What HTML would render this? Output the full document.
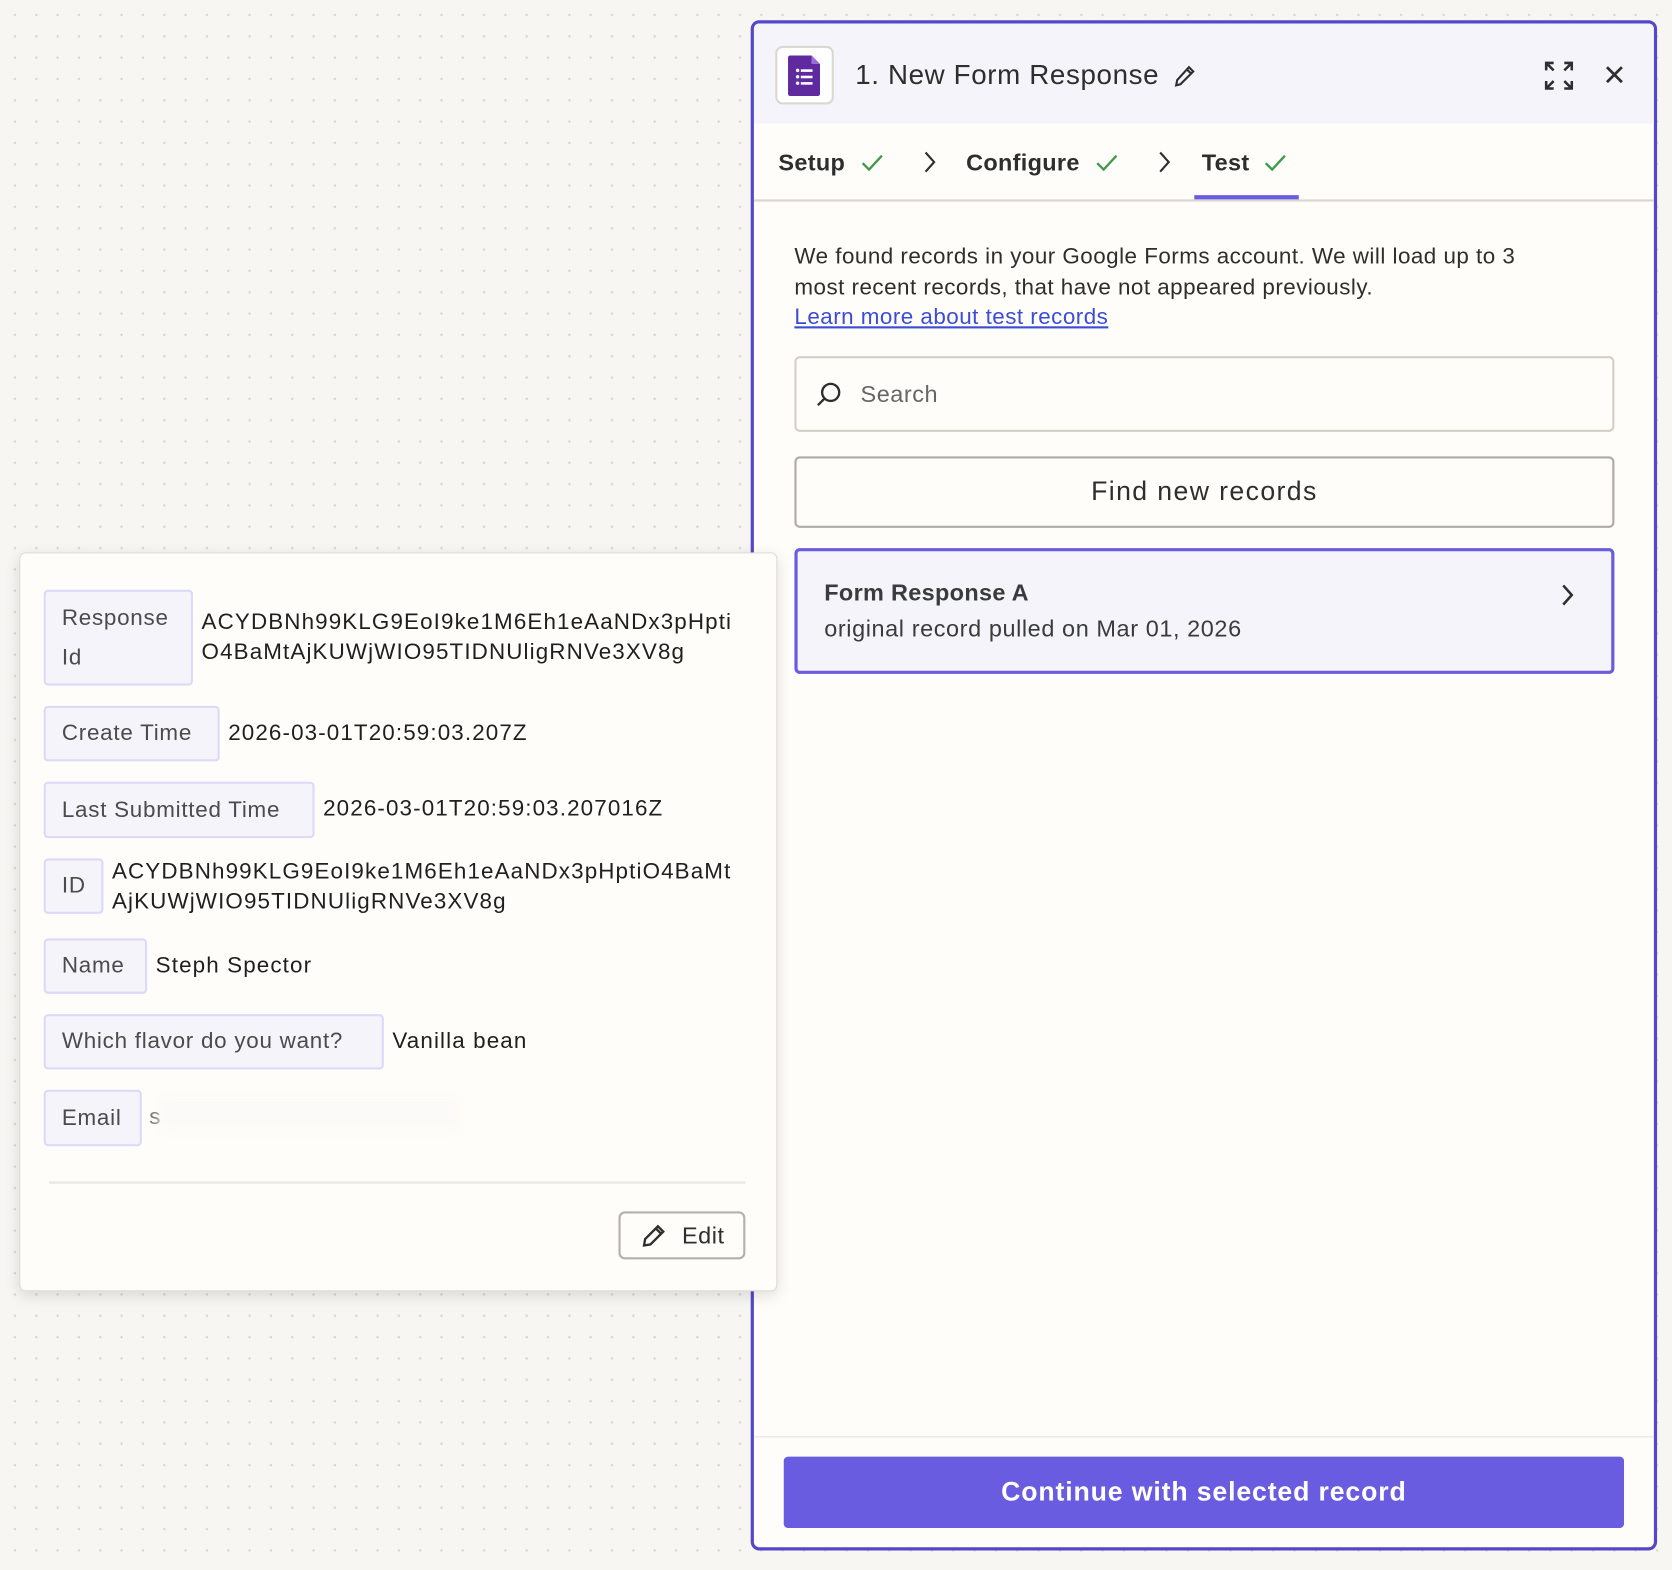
<!DOCTYPE html>
<html><head><meta charset="utf-8"><style>
*{box-sizing:border-box;margin:0;padding:0}
html,body{width:1672px;height:1570px;overflow:hidden;background:#f7f6f3;font-family:"Liberation Sans",sans-serif}
#w{position:absolute;left:0;top:0;width:1568px;height:1472px;transform:scale(1.06633);transform-origin:0 0;
background-color:#f7f6f3;background-image:radial-gradient(#d9d6cf 1px,transparent 1.2px);background-size:20px 20px;background-position:4px 4px}
.a{position:absolute}
.panel{left:704px;top:19px;width:850px;height:1435px;border:3px solid #5447c9;border-radius:8px;background:#fffdf9;overflow:hidden}
.hdr{left:0;top:0;width:100%;height:94px;background:#f5f4fb}
.t{color:#2d2e2e}
.lbl{position:absolute;left:41px;background:#f5f4fb;border:2px solid #dcdaf8;border-radius:4px;font-size:21px;color:#4b4b4b;padding:0 15px;display:flex;align-items:center;letter-spacing:0.7px;white-space:nowrap;z-index:3}
.val{position:absolute;font-size:21px;color:#1f1f1f;line-height:28px;letter-spacing:1.05px;white-space:nowrap;z-index:3}
</style></head><body><div id="w">

<div class="a panel">
<div class="a hdr"></div>
<div class="a" style="left:20px;top:21px;width:55px;height:55px;background:#fff;border:2px solid #dcd8d0;border-radius:7px">
<svg class="a" style="left:10px;top:7px" width="32" height="38" viewBox="0 0 32 38"><path d="M2 0h20l8 8v28a2 2 0 0 1-2 2H2a2 2 0 0 1-2-2V2a2 2 0 0 1 2-2z" fill="#5f2aa0"/><path d="M22 0l8 8h-8z" fill="#9b6fd6"/><g fill="#fff"><circle cx="9" cy="14" r="1.6"/><circle cx="9" cy="20" r="1.6"/><circle cx="9" cy="26" r="1.6"/><rect x="12" y="13" width="11" height="2.4"/><rect x="12" y="19" width="11" height="2.4"/><rect x="12" y="25" width="11" height="2.4"/></g></svg></div>
<div class="a t" style="left:95px;top:33px;font-size:26px;font-weight:500;letter-spacing:0.6px">1. New Form Response</div>
<svg class="a" style="left:392px;top:37px" width="24" height="24" viewBox="0 0 24 24" fill="none" stroke="#2d2e2e" stroke-width="2"><path d="M4 21l1-5L16 4l4 4L8 20z M14 6l4 4"/></svg>
<svg class="a" style="left:741px;top:35px" width="28" height="28" viewBox="0 0 28 28" fill="none" stroke="#2d2e2e" stroke-width="2.4"><path d="M2 9V2h7M2 2l7 7M26 9V2h-7M26 2l-7 7M2 19v7h7M2 26l7-7M26 19v7h-7M26 26l-7-7"/></svg>
<svg class="a" style="left:798px;top:39px" width="18" height="18" viewBox="0 0 18 18" stroke="#2d2e2e" stroke-width="2.6"><path d="M2 2l14 14M16 2L2 16"/></svg>
<div class="a t" style="left:23px;top:118px;font-size:22px;font-weight:bold;letter-spacing:0.3px">Setup</div>
<svg class="a" style="left:100px;top:122px" width="22" height="18" viewBox="0 0 22 18" fill="none" stroke="#3f9a4e" stroke-width="2.2"><path d="M2 9l6 6L20 2"/></svg>
<svg class="a" style="left:158px;top:118px" width="14" height="24" viewBox="0 0 14 24" fill="none" stroke="#2d2e2e" stroke-width="2"><path d="M3 3l8 9-8 9"/></svg>
<div class="a t" style="left:199px;top:118px;font-size:22px;font-weight:bold;letter-spacing:0.3px">Configure</div>
<svg class="a" style="left:320px;top:122px" width="22" height="18" viewBox="0 0 22 18" fill="none" stroke="#3f9a4e" stroke-width="2.2"><path d="M2 9l6 6L20 2"/></svg>
<svg class="a" style="left:378px;top:118px" width="14" height="24" viewBox="0 0 14 24" fill="none" stroke="#2d2e2e" stroke-width="2"><path d="M3 3l8 9-8 9"/></svg>
<div class="a t" style="left:420px;top:118px;font-size:22px;font-weight:bold;letter-spacing:0.3px">Test</div>
<svg class="a" style="left:478px;top:122px" width="22" height="18" viewBox="0 0 22 18" fill="none" stroke="#3f9a4e" stroke-width="2.2"><path d="M2 9l6 6L20 2"/></svg>
<div class="a" style="left:413px;top:161px;width:98px;height:4px;background:#6a5ce0"></div>
<div class="a" style="left:0;top:165px;width:100%;height:2px;background:#d9d5cd"></div>
<div class="a t" style="left:38px;top:205px;font-size:21px;line-height:28.5px;width:790px;letter-spacing:0.45px;white-space:nowrap">We found records in your Google Forms account. We will load up to 3<br>most recent records, that have not appeared previously.<br><span style="color:#3b4dd6;text-decoration:underline">Learn more about test records</span></div>
<div class="a" style="left:38px;top:312px;width:769px;height:71px;border:2px solid #d3cfc7;border-radius:5px"></div>
<svg class="a" style="left:57px;top:335px" width="26" height="26" viewBox="0 0 26 26" fill="none" stroke="#2d2e2e" stroke-width="2.2"><circle cx="15" cy="11" r="8"/><path d="M9 17l-6 6"/></svg>
<div class="a" style="left:100px;top:335px;font-size:22px;color:#666;letter-spacing:0.5px">Search</div>
<div class="a t" style="left:38px;top:406px;width:769px;height:67px;border:2px solid #aeaba4;border-radius:5px;display:flex;align-items:center;justify-content:center;font-size:25px;font-weight:500;letter-spacing:1.3px">Find new records</div>
<div class="a" style="left:38px;top:492px;width:769px;height:118px;border:3px solid #6a5ce0;border-radius:5px;background:#f5f4fb"></div>
<div class="a t" style="left:66px;top:521px;font-size:22px;font-weight:bold;color:#3a3b3b;letter-spacing:0.3px">Form Response A</div>
<div class="a t" style="left:66px;top:555px;font-size:22px;color:#3a3b3b;letter-spacing:0.55px">original record pulled on Mar 01, 2026</div>
<svg class="a" style="left:756px;top:524px" width="14" height="24" viewBox="0 0 14 24" fill="none" stroke="#2d2e2e" stroke-width="2.4"><path d="M3 3l8 9-8 9"/></svg>
<div class="a" style="left:0;top:1325px;width:100%;height:1px;background:#e5e2dc"></div>
<div class="a" style="left:28px;top:1344px;width:788px;height:67px;background:#6a5ce0;border-radius:4px;color:#fff;font-size:25px;font-weight:bold;display:flex;align-items:center;justify-content:center;letter-spacing:0.8px">Continue with selected record</div>
</div>

<div class="a" style="left:18px;top:518px;width:711px;height:693px;background:#fffdf9;border:1px solid #dedbd4;border-radius:6px;box-shadow:0 4px 14px rgba(0,0,0,.12);z-index:2"></div>
<div class="lbl" style="top:553px;height:90px;width:140px;line-height:37px">Response<br>Id</div>
<div class="val" style="left:189px;top:570px">ACYDBNh99KLG9EoI9ke1M6Eh1eAaNDx3pHpti<br>O4BaMtAjKUWjWIO95TIDNUligRNVe3XV8g</div>
<div class="lbl" style="top:662px;height:52px;width:165px">Create Time</div>
<div class="val" style="left:214px;top:674px">2026-03-01T20:59:03.207Z</div>
<div class="lbl" style="top:733px;height:53px;width:254px">Last Submitted Time</div>
<div class="val" style="left:303px;top:745px">2026-03-01T20:59:03.207016Z</div>
<div class="lbl" style="top:805px;height:52px;width:56px">ID</div>
<div class="val" style="left:105px;top:804px">ACYDBNh99KLG9EoI9ke1M6Eh1eAaNDx3pHptiO4BaMt<br>AjKUWjWIO95TIDNUligRNVe3XV8g</div>
<div class="lbl" style="top:880px;height:52px;width:97px">Name</div>
<div class="val" style="left:146px;top:892px">Steph Spector</div>
<div class="lbl" style="top:951px;height:52px;width:319px">Which flavor do you want?</div>
<div class="val" style="left:368px;top:963px">Vanilla bean</div>
<div class="lbl" style="top:1022px;height:53px;width:92px">Email</div>
<div class="val" style="left:140px;top:1034px;color:#777">s</div>
<div class="a" style="left:150px;top:1030px;width:280px;height:30px;background:#fbfaf8;filter:blur(4px);z-index:3"></div>
<div class="a" style="left:46px;top:1108px;width:653px;height:2px;background:#e8e6e0;z-index:3"></div>
<div class="a" style="left:580px;top:1136px;width:119px;height:45px;border:2px solid #b3b1aa;border-radius:6px;display:flex;align-items:center;justify-content:center;gap:14px;font-size:22px;color:#2d2e2e;z-index:3;letter-spacing:0.5px">
<svg width="26" height="26" viewBox="0 0 26 26" fill="none" stroke="#2d2e2e" stroke-width="2.2"><path d="M4 22l1-6L17 4l5 5L10 21z M15 6l5 5"/></svg>Edit</div>
</div></body></html>
